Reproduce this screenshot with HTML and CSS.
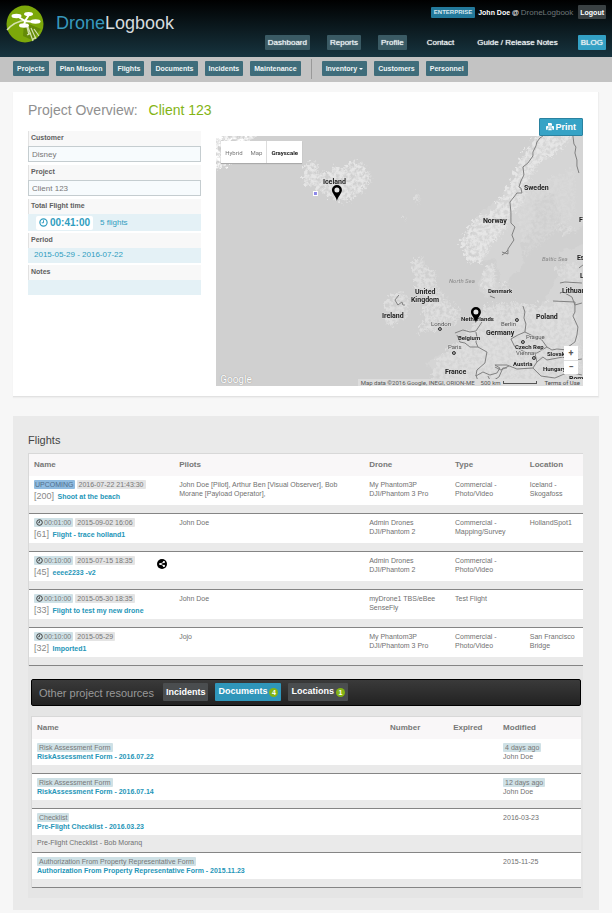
FILE: index.html
```html
<!DOCTYPE html>
<html lang="en">
<head>
<meta charset="utf-8">
<title>DroneLogbook - Project Overview</title>
<link rel="stylesheet" href="styles.css">
</head>
<body>
<svg class="defs" aria-hidden="true">
  <symbol id="clock" viewBox="0 0 12 12"><circle cx="6" cy="6" r="4.8" fill="none" stroke="currentColor" stroke-width="1.6"/><path d="M6 3v3.4H3.6" fill="none" stroke="currentColor" stroke-width="1.3"/></symbol>
  <symbol id="pin" viewBox="0 0 10 16"><path d="M5 16C4.300 11.500 0 8.500 0 5a5 5 0 0 1 10 0c0 3.500-4.300 6.500-5 11z"/><circle cx="5" cy="5" r="2.500" fill="#e6e6e6"/></symbol>
</svg>
<header class="top">
  <a class="brand" href="#">
    <svg class="logo" viewBox="0 0 38 38" aria-hidden="true">
      <circle cx="19" cy="19" r="18.500" fill="#7ca80a"/>
      <path d="M18 17l17 7-9 11-9-4z" fill="#648a08"/>
      <path d="M1 25C6 19 12 16 20 15" fill="none" stroke="#d5e3b0" stroke-width="1.500"/>
      <path d="M11 11l8 5 4-6M19 16l10 1M19 16l-1 5" fill="none" stroke="#fff" stroke-width="2"/>
      <path d="M21 22l2 8M22 22l5 14M25 23l5 11M28 24l5 7M21 30l4-2M26 35l4-3" fill="none" stroke="#d2e0b0" stroke-width="1.200"/>
      <g fill="#fff"><ellipse cx="10.500" cy="11" rx="5" ry="2.200"/><ellipse cx="22.500" cy="9" rx="4.500" ry="2"/><ellipse cx="29.500" cy="16.500" rx="5" ry="2.200"/><ellipse cx="18" cy="20.500" rx="5" ry="2.200"/></g>
    </svg>
    <span class="wordmark"><span class="accent">Drone</span>Logbook</span>
  </a>
  <div class="top-right">
    <div class="user"><span class="plan">ENTERPRISE</span><b>John Doe @ </b><span class="org">DroneLogbook</span><button class="logout" type="button">Logout</button></div>
    <nav class="mainnav">
      <a class="boxed" href="#">Dashboard</a><a class="boxed" href="#">Reports</a><a class="boxed" href="#">Profile</a><a href="#">Contact</a><a href="#">Guide / Release Notes</a><a class="blog" href="#">BLOG</a>
    </nav>
  </div>
</header>
<nav class="subnav">
  <a href="#">Projects</a><a href="#">Plan Mission</a><a href="#">Flights</a><a href="#">Documents</a><a href="#">Incidents</a><a href="#">Maintenance</a>
  <span class="sep"></span>
  <a class="drop" href="#">Inventory<i></i></a><a href="#">Customers</a><a href="#">Personnel</a>
</nav>
<main>
  <section class="card">
    <h1>Project Overview: <span>Client 123</span></h1>
    <div class="overview">
      <form class="facts">
        <label for="customer">Customer</label>
        <input id="customer" value="Disney">
        <label for="project">Project</label>
        <input id="project" value="Client 123">
        <h3>Total Flight time</h3>
        <div class="value total"><span class="time"><svg class="ic" aria-hidden="true"><use href="#clock"/></svg>00:41:00</span><span>5 flights</span></div>
        <h3>Period</h3>
        <div class="value">2015-05-29 - 2016-07-22</div>
        <h3>Notes</h3>
        <div class="value"></div>
      </form>
      <div class="mapcol">
        <button class="print" type="button"><svg viewBox="0 0 12 12" aria-hidden="true"><path d="M3 0h5l1 1v4H3z" fill="#fff"/><path d="M1 4.500h10q1 0 1 1V10H0V5.500q0-1 1-1z" fill="#fff"/><path d="M3 7.500h6V11.500H3z" fill="#fff" stroke="#2f9dc0"/><path d="M3 4.700h6" stroke="#2f9dc0"/></svg>Print</button>
        <div class="map">
          <svg class="mapart" viewBox="0 0 367 250" preserveAspectRatio="xMidYMid slice" role="img" aria-label="Map of northern Europe">
            <defs>
              <filter id="rough" x="-10%" y="-10%" width="120%" height="120%"><feTurbulence type="fractalNoise" baseFrequency=".12" numOctaves="3" seed="4"/><feDisplacementMap in="SourceGraphic" scale="9" xChannelSelector="R" yChannelSelector="G"/></filter>
              <filter id="relief" x="-10%" y="-10%" width="120%" height="120%" color-interpolation-filters="sRGB"><feTurbulence type="fractalNoise" baseFrequency=".28" numOctaves="4" seed="8" result="n"/><feColorMatrix in="n" values="0 0 0 0 0  0 0 0 0 0  0 0 0 0 0  3 0 0 0 -.9" result="m"/><feDisplacementMap in="SourceGraphic" in2="n" scale="14" xChannelSelector="R" yChannelSelector="G" result="d"/><feComposite in="d" in2="m" operator="in"/></filter>
            </defs>
            <rect width="367" height="250" fill="#d0d0d0"/>
            <g fill="#d5d5d5" filter="url(#rough)">
              <path d="M322-5h50v90l-14 12-12-10-8-30-20 8-2 30-12 12 4 20-14 18-8 4-6-26-14 2-12-18 8-30 22-14 16-20 16-28z"/>
              <path d="M330 160l12-20 10-10-8-14 24-8v150H222l2-18-16-14 20-8 14-10 16-20 12-12 10-4 8 8 14-4 20 4z"/>
              <path d="M262 150l6-18 12-6-2 18 10 6-12 6-6 6z"/>
            </g>
            <g fill="#e6e6e6" filter="url(#relief)">
              <path d="M-6-4h48L30 8 18 28 0 34z" fill="#fff"/>
              <path d="M88 32l8-8 8 5-3 8 10 1 7-9 10 2 10-7 12 5 6 15-8 10-14 11-14 1-12-10-8-3-12-5z"/>
              <path d="M322-2h36l-12 16-22 12-10 18-6 24-12 8-6 18-18 20-6 14-14-2-8-20 12-20 22-12 16-26 12-28z"/>
              <path d="M196 126l10-6 4 10 10 5 2 16 12 16 12 8-6 12-18 8-22 2 10-14-4-10 4-10-10-8z" opacity=".7"/>
              <path d="M178 158l10-3 6 10-2 14-14 10-10-2 4-10-4-10z" opacity=".7"/>
              <path d="M266 148l2-12 10-10 3 12-3 15-7 4zM286 146l6 0-1 8-6 1z" opacity=".7"/>
              <path d="M338 134l10-8 18 4v16l-12 2zM340 86l22 8-14 6z" opacity=".5"/>
              <path d="M198 62l4-8 2 10-4 6zM188 78l3 2-2 8z" opacity=".6"/>
            </g>
            <g fill="#dedede" filter="url(#relief)">
              <path d="M222 222l30-24 20-30 30-2 18 4 28-6 12 10 6 40v36H212z"/><path d="M300 60l60-30v50l-50 40z" opacity=".4"/>
            </g>
            <g class="borders">
              <path d="M327 0l-3 2-3 4-1 4-3 6 0 4-5 7-5 4 1 8-3 6-2 6 2 1 1 5h-5l-3 4-4 5 1 10 0 11 4 4-3 8 2 5-2 3-4 6 0 5-6-2"/>
              <path d="M357 0l1 8 2 3-1 6 2 7 0 6 2 7M286 119l3-2 3-3M337 165l22 1v10l-2 4 5 11-1 8-2 7-7 5M344 147l5-1 17 1M347 156l-3 1 3-1 9 5 3 8 7-2M307 170l2 6-1 6 2 6-1 8-7 3-7 4 4 8 6 3 6 3 10 0 10-6 5 3 5-1 11 1M331 211l-5-7-9-4-8-4"/>
              <path d="M239 197l8-3 7 2 6-1 4-6 2-3M260 196l1 5-1 5 2 5M241 199l3 7 5 1 5 4 8 0 9 5-2 11-8 7-1 6 7-4 7 3 7-2 3-5-5-3 12 0 10 4 16-1 4-6-2-9M321 226l6-5 4 3 16-3 5 4 14-2M260 239l2 6M272 240l3 6 8-5 4-9 4 0M279 231l6 3 8-4M317 232l8 8 14 2 14-6 13 3M183 159l-4 5 3 5 4-3 1 3 2 0M274 160l5 2M363 132l4-3"/>
            </g>
            <g class="names">
              <text x="107" y="48">Iceland</text><text x="308" y="54">Sweden</text><text x="267" y="87">Norway</text><text x="363" y="86">F</text>
              <text x="199" y="158">United</text><text x="195" y="166">Kingdom</text><text x="166" y="182">Ireland</text><text class="sm" x="272" y="157">Denmark</text>
              <text x="346" y="157">Lithuania</text><text x="361" y="124">Es</text><text x="364" y="142">L</text><text x="320" y="183">Poland</text><text class="sm" x="245" y="185">Netherlands</text><text x="270" y="199">Germany</text>
              <text class="sm" x="242" y="204">Belgium</text><text class="sm" x="299" y="213">Czech Rep</text><text class="sm" x="331" y="220">Slovakia</text><text class="sm" x="297" y="230">Austria</text><text class="sm" x="327" y="235">Hungary</text><text x="229" y="238">France</text><text x="353" y="245">Romania</text>
              <g class="city"><text x="215" y="190">London</text><text x="285" y="190">Berlin</text><text x="310" y="203">Prague</text><text x="232" y="213">Paris</text><text x="300" y="219">Vienna</text></g>
              <g class="sea"><text x="233" y="147">North Sea</text><text x="326" y="125">Baltic Sea</text></g>
            </g>
            <g fill="#aaa" stroke="#333" stroke-width="1"><circle cx="224" cy="193" r="1.500"/><circle cx="301" cy="184" r="1.500"/><circle cx="307" cy="206" r="1.500"/><circle cx="238" cy="217" r="1.500"/><circle cx="318" cy="222" r="1.500"/></g>
            <rect x="97.500" y="55.500" width="4" height="4" fill="#8b86e8" stroke="#fff"/>
            <use href="#pin" x="116" y="49" width="10" height="16"/>
            <use href="#pin" x="255" y="171" width="10" height="16"/>
          </svg>
          <div class="maptypes"><button type="button">Hybrid</button><button type="button">Map</button><button class="on" type="button">Grayscale</button></div>
          <div class="zoomer"><button type="button">+</button><button type="button">−</button></div>
          <span class="google">Google</span>
          <div class="credits"><span>Map data ©2016 Google, INEGI, ORION-ME</span><span>500 km</span><i></i><a href="#">Terms of Use</a></div>
        </div>
      </div>
    </div>
  </section>

  <section class="panel">
    <h2>Flights</h2>
    <table class="grid flights">
      <colgroup><col class="f1"><col class="f2"><col class="f3"><col class="f4"><col class="f5"></colgroup>
      <thead><tr><th>Name</th><th>Pilots</th><th>Drone</th><th>Type</th><th>Location</th></tr></thead>
      <tbody>
        <tr><td><div class="tags"><span class="tag up">UPCOMING</span><span class="tag">2016-07-22 21:43:30</span></div><div class="title">[200] <a href="#">Shoot at the beach</a></div></td><td>John Doe [Pilot], Arthur Ben [Visual Observer], Bob<br>Morane [Payload Operator],</td><td>My Phantom3P<br>DJI/Phantom 3 Pro</td><td>Commercial -<br>Photo/Video</td><td>Iceland -<br>Skogafoss</td></tr>
        <tr class="gap"><td colspan="5"></td></tr>
        <tr><td><div class="tags"><span class="tag time"><svg class="ic" aria-hidden="true"><use href="#clock"/></svg>00:01:00</span><span class="tag">2015-09-02 16:06</span></div><div class="title">[61] <a href="#">Flight - trace holland1</a></div></td><td>John Doe</td><td>Admin Drones<br>DJI/Phantom 2</td><td>Commercial -<br>Mapping/Survey</td><td>HollandSpot1</td></tr>
        <tr class="gap"><td colspan="5"></td></tr>
        <tr><td><div class="tags"><span class="tag time"><svg class="ic" aria-hidden="true"><use href="#clock"/></svg>00:10:00</span><span class="tag">2015-07-15 18:35</span><svg class="share" viewBox="0 0 12 12" aria-label="Shared"><circle cx="6" cy="6" r="6"/><path d="M8.300 3.700L4 6l4.300 2.300" fill="none" stroke="#fff" stroke-width="1"/><g fill="#fff"><circle cx="8.300" cy="3.700" r="1.300"/><circle cx="3.800" cy="6" r="1.300"/><circle cx="8.300" cy="8.300" r="1.300"/></g></svg></div><div class="title">[45] <a href="#">eeee2233 -v2</a></div></td><td></td><td>Admin Drones<br>DJI/Phantom 2</td><td>Commercial -<br>Photo/Video</td><td></td></tr>
        <tr class="gap"><td colspan="5"></td></tr>
        <tr><td><div class="tags"><span class="tag time"><svg class="ic" aria-hidden="true"><use href="#clock"/></svg>00:10:00</span><span class="tag">2015-05-30 18:35</span></div><div class="title">[33] <a href="#">Flight to test my new drone</a></div></td><td>John Doe</td><td>myDrone1 TBS/eBee<br>SenseFly</td><td>Test Flight</td><td></td></tr>
        <tr class="gap"><td colspan="5"></td></tr>
        <tr><td><div class="tags"><span class="tag time"><svg class="ic" aria-hidden="true"><use href="#clock"/></svg>00:10:00</span><span class="tag">2015-05-29</span></div><div class="title">[32] <a href="#">Imported1</a></div></td><td>Jojo</td><td>My Phantom3P<br>DJI/Phantom 3 Pro</td><td>Commercial -<br>Photo/Video</td><td>San Francisco<br>Bridge</td></tr>
        <tr class="gap"><td colspan="5"></td></tr>
      </tbody>
    </table>
    <div class="resources">
      <div class="bar"><span>Other project resources</span><button type="button">Incidents</button><button class="on" type="button">Documents<i>4</i></button><button type="button">Locations<i>1</i></button></div>
      <table class="grid docs">
        <colgroup><col class="d1"><col class="d2"><col class="d3"><col class="d4"></colgroup>
        <thead><tr><th>Name</th><th>Number</th><th>Expired</th><th>Modified</th></tr></thead>
        <tbody>
          <tr><td><span class="tag doc">Risk Assessment Form</span><a href="#">RiskAssessment Form - 2016.07.22</a></td><td></td><td></td><td><span class="tag doc">4 days ago</span>John Doe</td></tr>
          <tr class="gap"><td colspan="4"></td></tr>
          <tr><td><span class="tag doc">Risk Assessment Form</span><a href="#">RiskAssessment Form - 2016.07.14</a></td><td></td><td></td><td><span class="tag doc">12 days ago</span>John Doe</td></tr>
          <tr class="gap"><td colspan="4"></td></tr>
          <tr><td><span class="tag doc">Checklist</span><a href="#">Pre-Flight Checklist - 2016.03.23</a></td><td></td><td></td><td>2016-03-23</td></tr>
          <tr class="gap note"><td colspan="4">Pre-Flight Checklist - Bob Moranq</td></tr>
          <tr><td><span class="tag doc">Authorization From Property Representative Form</span><a href="#">Authorization From Property Representative Form - 2015.11.23</a></td><td></td><td></td><td>2015-11-25</td></tr>
          <tr class="gap"><td colspan="4"></td></tr>
        </tbody>
      </table>
    </div>
  </section>
</main>
</body>
</html>
```
FILE: styles.css
```css
* { box-sizing: border-box; }
body { margin: 0; background: #f7f7f7; color: #707070; font: 7px/9px "Liberation Sans", Arial, sans-serif; }
a { text-decoration: none; color: #2596b8; }
button, input { font: inherit; margin: 0; border: 0; }
h1, h2, h3 { margin: 0; font-weight: normal; }
.defs { position: absolute; width: 0; height: 0; }

.top { display: flex; justify-content: space-between; height: 57px; padding: 5px 6px 7px; background: linear-gradient(#000, #17343f); }
.brand { display: flex; gap: 12px; color: #d5dbdd; }
.logo { width: 38px; height: 38px; }
.wordmark { font-size: 18px; line-height: 37px; }
.accent { color: #3798bc; }
.top-right { display: flex; flex-direction: column; justify-content: space-between; align-items: flex-end; }
.user { display: flex; align-items: center; font-size: 8px; color: #fff; white-space: pre; }
.user b { font-size: 7px; }
.plan { padding: 1px 3px; margin-right: 3px; background: #23799b; color: #d8e8ef; font-size: 6px; font-weight: bold; border-radius: 1px; }
.org { color: #6f7679; }
.logout { margin-left: 5px; padding: 0 2px; height: 14px; background: #3a4143; color: #fff; font-weight: bold; font-size: 7px; border-radius: 1px; }
.mainnav { display: flex; gap: 17px; font-size: 8px; }
.mainnav a { padding: 0 3px; line-height: 15px; color: #edf2f3; text-shadow: 0 0 1px #edf2f3; border-radius: 1px; }
.mainnav .boxed { background: #3a5a64; }
.mainnav .blog { background: #33a0c4; }

.subnav { display: flex; align-items: flex-start; gap: 7px; height: 25px; padding: 4px 13px; background: #c3c3c3; }
.subnav a { padding: 0 4px; line-height: 15px; font-weight: bold; color: #f0f5f6; background: #3f6d7b; border-radius: 1px; }
.sep { width: 1px; height: 20px; margin: -2px 3px 0; background: #999; }
.drop i { display: inline-block; margin: 0 0 1px 2px; border: 2px solid transparent; border-top-color: #fff; border-bottom: 0; }

main { padding: 10px 13px 3px 13px; }
.card { padding: 0 15px 10px; background: #fff; border-bottom: 1px solid #e2e2e2; border-right: 1px solid #eee; box-shadow: 0 1px 1px #eee; }
h1 { padding-top: 9px; font-size: 14px; line-height: 18px; color: #909090; }
h1 span { margin-left: 7px; color: #84b414; }
.overview { display: flex; gap: 15px; }
.facts { flex: 0 0 31.2%; padding-top: 12px; }
.facts label, .facts h3 { display: block; height: 15px; padding-left: 2px; line-height: 14px; font-size: 7px; font-weight: bold; background: #f8f8f8; border-left: 1px solid #e2e2e2; color: #606060; }
.facts input { display: block; width: 100%; height: 16px; padding: 0 3px; margin-bottom: 3px; border: 1px solid #c5cdd0; background: #f7fbfd; color: #777; font-size: 8px; line-height: 12px; }
.value { height: 15px; margin-bottom: 2px; padding: 0 6px; line-height: 14px; font-size: 8px; color: #2f9dc0; background: #e4f1f6; }
.total { display: flex; align-items: center; gap: 7px; height: 17px; padding-left: 8px; }
.time .ic { width: 9px; height: 9px; margin-right: 2px; vertical-align: -1px; }
.total .time { padding: 0 3px; background: #fff; border-radius: 2px; font-size: 10px; font-weight: bold; }
.mapcol { flex: 1; }
.print { display: flex; align-items: center; gap: 1px; height: 18px; margin: -1px 0 0 auto; padding: 0 6px; border: 1px solid #2a82a0; border-radius: 1px; background: #36a3c6; color: #fff; font-size: 9px; font-weight: bold; }
.print svg { width: 8px; height: 8px; }
.map { position: relative; height: 250px; overflow: hidden; background: #d0d0d0; font-family: Roboto, sans-serif; }
.mapart { display: block; width: 100%; height: 100%; }
.borders { fill: none; stroke: #808080; stroke-width: 1px; stroke-linejoin: round; }
.names { font-size: 7px; font-weight: 700; fill: #222; stroke: #ddd; stroke-width: 1px; paint-order: stroke; }
.names .sm { font-size: 6px; }
.names .city { font-size: 6px; font-weight: 400; fill: #555; }
.names .sea { font-size: 6px; font-weight: 400; font-style: italic; fill: #888; stroke: none; }
.maptypes { position: absolute; left: 5px; top: 5px; display: flex; height: 22px; background: #fff; box-shadow: 0 1px 1px #aaa; }
.maptypes button { padding: 0 4px; background: none; color: #777; font-size: 6px; }
.maptypes .on { border-left: 1px solid #ddd; color: #222; font-weight: bold; }
.zoomer { position: absolute; right: 5px; bottom: 12px; display: flex; flex-direction: column; width: 14px; background: #fff; }
.zoomer button { height: 14px; padding: 0; background: none; color: #555; font-size: 9px; font-weight: bold; }
.zoomer button + button { border-top: 1px solid #ddd; }
.google { position: absolute; left: 4px; bottom: 2px; color: #fff; font-size: 10px; text-shadow: 0 0 1px #777; }
.credits { position: absolute; right: 0; bottom: 0; display: flex; align-items: center; gap: 3px; padding: 0 3px; background: #ddd; color: #555; font-size: 6px; line-height: 7px; white-space: nowrap; }
.credits span + span { margin-left: 3px; }
.credits i { width: 34px; height: 3px; border: 1px solid #555; border-top: 0; }
.credits a { margin-left: 4px; color: #444; }

.panel { margin-top: 19px; padding: 18px 16px 12px 15px; background: #eaeaea; }
h2 { font-size: 11px; line-height: 12px; margin-bottom: 7px; color: #444; }
.grid { width: 100%; border-collapse: separate; border-spacing: 0; table-layout: fixed; border-top: 1px solid #d8d8d8; border-left: 1px solid #d8d8d8; }
.grid th { height: 22px; padding: 0 5px 1px; text-align: left; font-size: 8px; background: #f9f7f8; color: #777; }
.grid td { height: 29px; padding: 4px 0 0 5px; vertical-align: top; background: #fff; }
.grid .gap td { height: 9px; padding: 0 5px; background: #eaeaea; border-bottom: 1px solid #858585; }
.grid a { font-weight: bold; }
.f1 { width: 26.2%; } .f2 { width: 34.3%; } .f3 { width: 15.5%; } .f4 { width: 13.5%; } .f5 { width: 10.5%; }
.tags { display: flex; gap: 2px; }
.tag { padding: 0 2px; background: #e4e4e4; border-radius: 1px; white-space: nowrap; color: #777; }
.tag.up { padding: 0 1px; background: #8fbbe0; color: #4f6f8c; }
.tag.time, .tag.doc { background: #cfe1e6; }
.tag .ic { width: 7px; height: 7px; margin-right: 1px; vertical-align: -1px; color: #333; }
.share { width: 10px; height: 10px; margin: 3px 7px -4px auto; }
.title { font-size: 9px; line-height: 14px; color: #888; white-space: nowrap; }
.title a { margin-left: 1px; font-size: 7px; }

.resources { padding: 13px 2px 10px 3px; background: #e5e5e5; }
.bar { display: flex; align-items: flex-start; gap: 7px; height: 27px; margin-bottom: 10px; padding: 3px 7px; border: 1px solid #000; border-radius: 2px; background: linear-gradient(#3a3a3a, #222); color: #999; font-size: 11px; }
.bar span { line-height: 21px; margin-right: 2px; }
.bar button { height: 18px; padding: 0 3px; background: #4a4d4f; color: #fff; font-size: 9px; font-weight: bold; border-radius: 1px; }
.bar .on { background: #2f96ba; }
.bar i { display: inline-block; width: 9px; margin-left: 2px; border-radius: 5px; background: #84b414; font-size: 7px; line-height: 9px; font-style: normal; vertical-align: middle; }
.docs td { height: 26px; }
.docs td a { display: block; }
.docs .doc { display: table; }
.docs .note td { height: 18px; line-height: 16px; }
.d1 { width: 64.3%; } .d2 { width: 11.5%; } .d3 { width: 9.1%; } .d4 { width: 15.1%; }
```
